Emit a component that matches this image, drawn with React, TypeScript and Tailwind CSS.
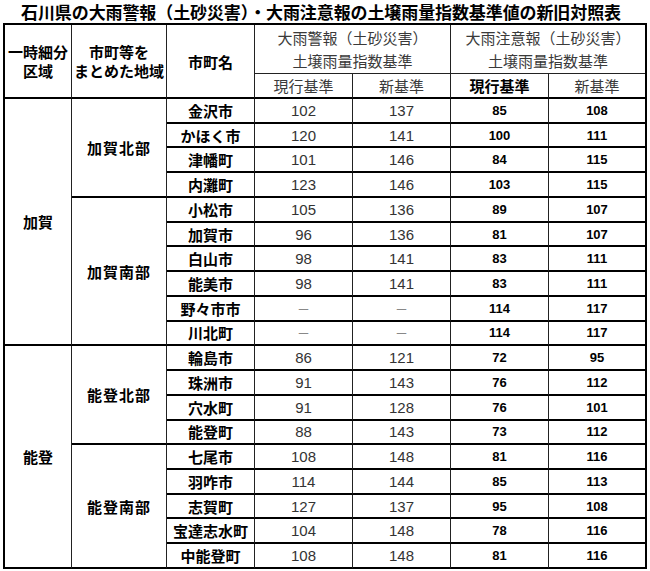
import React from "react";

type Row = [string, string, string, string, string];

const rows: Row[] = [
  ["金沢市", "102", "137", "85", "108"],
  ["かほく市", "120", "141", "100", "111"],
  ["津幡町", "101", "146", "84", "115"],
  ["内灘町", "123", "146", "103", "115"],
  ["小松市", "105", "136", "89", "107"],
  ["加賀市", "96", "136", "81", "107"],
  ["白山市", "98", "141", "83", "111"],
  ["能美市", "98", "141", "83", "111"],
  ["野々市市", "－", "－", "114", "117"],
  ["川北町", "－", "－", "114", "117"],
  ["輪島市", "86", "121", "72", "95"],
  ["珠洲市", "91", "143", "76", "112"],
  ["穴水町", "91", "128", "76", "101"],
  ["能登町", "88", "143", "73", "112"],
  ["七尾市", "108", "148", "81", "116"],
  ["羽咋市", "114", "144", "85", "113"],
  ["志賀町", "127", "137", "95", "108"],
  ["宝達志水町", "104", "148", "78", "116"],
  ["中能登町", "108", "148", "81", "116"],
];

const cell =
  "flex items-center justify-center border-b-2 border-r border-b-black border-r-[#222]";
const lastCell = "flex items-center justify-center border-b-2 border-b-black";

function Num({ v, bold, last }: { v: string; bold?: boolean; last?: boolean }) {
  const base = last ? lastCell : cell;
  if (v === "－") {
    return (
      <div className={`${base} leading-none`}>
        <span className="font-['Noto_Sans_CJK_JP',sans-serif] text-[13px] text-[#888]">－</span>
      </div>
    );
  }
  return (
    <div
      className={`${base} leading-none font-['Liberation_Sans',sans-serif] ${
        bold ? "font-bold text-[13px] text-black" : "text-[15px] text-[#333]"
      }`}
    >
      {v}
    </div>
  );
}

function CityRow({ r }: { r: Row }) {
  return (
    <>
      <div className={`${cell} leading-none font-bold text-[15px] text-black`}>{r[0]}</div>
      <Num v={r[1]} />
      <Num v={r[2]} />
      <Num v={r[3]} bold />
      <Num v={r[4]} bold last />
    </>
  );
}

export default function App() {
  return (
    <div className="w-[650px] h-[571px] bg-white font-['Noto_Sans_CJK_JP','Noto_Sans',sans-serif] text-black">
      <div className="h-[23px] flex items-center justify-center pr-[8px] text-[17px] leading-[23px] font-bold tracking-[-0.1px]">
        石川県の大雨警報（土砂災害）・大雨注意報の土壌雨量指数基準値の新旧対照表
      </div>
      <div className="ml-[3px] w-[644px] border-l-2 border-t-2 border-r-2 border-black grid grid-cols-[67px_95px_88px_98px_98px_98px_96px] grid-rows-[49px_25px_repeat(19,24.74px)]">
        {/* header */}
        <div className={`${cell} row-span-2 flex-col font-bold text-[15px] leading-[19px]`}>
          <span>一時細分</span>
          <span>区域</span>
        </div>
        <div className={`${cell} row-span-2 flex-col font-bold text-[15px] leading-[19px]`}>
          <span>市町等を</span>
          <span>まとめた地域</span>
        </div>
        <div className={`${cell} row-span-2 leading-none font-bold text-[15px]`}>市町名</div>
        <div className="col-span-2 flex flex-col items-center justify-center border-b border-r border-b-[#222] border-r-[#222] text-[15px] leading-[23px] text-[#3a3a3a]">
          <span>大雨警報（土砂災害）</span>
          <span>土壌雨量指数基準</span>
        </div>
        <div className="col-span-2 flex flex-col items-center justify-center border-b border-b-[#222] text-[15px] leading-[23px] text-[#3a3a3a]">
          <span>大雨注意報（土砂災害）</span>
          <span>土壌雨量指数基準</span>
        </div>
        <div className={`${cell} leading-none text-[15px] text-[#3a3a3a]`}>現行基準</div>
        <div className={`${cell} leading-none text-[15px] text-[#3a3a3a]`}>新基準</div>
        <div className={`${cell} leading-none text-[15px] font-bold text-black`}>現行基準</div>
        <div className={`${lastCell} leading-none text-[15px] text-[#3a3a3a]`}>新基準</div>

        {/* 加賀 */}
        <div className={`${cell} row-span-10 leading-none font-bold text-[15px]`}>加賀</div>
        <div className={`${cell} row-span-4 leading-none font-bold text-[15px] tracking-[1px]`}>加賀北部</div>
        <CityRow r={rows[0]} />
        <CityRow r={rows[1]} />
        <CityRow r={rows[2]} />
        <CityRow r={rows[3]} />
        <div className={`${cell} row-span-6 leading-none font-bold text-[15px] tracking-[1px]`}>加賀南部</div>
        <CityRow r={rows[4]} />
        <CityRow r={rows[5]} />
        <CityRow r={rows[6]} />
        <CityRow r={rows[7]} />
        <CityRow r={rows[8]} />
        <CityRow r={rows[9]} />

        {/* 能登 */}
        <div className={`${cell} row-span-9 leading-none font-bold text-[15px]`}>能登</div>
        <div className={`${cell} row-span-4 leading-none font-bold text-[15px] tracking-[1px]`}>能登北部</div>
        <CityRow r={rows[10]} />
        <CityRow r={rows[11]} />
        <CityRow r={rows[12]} />
        <CityRow r={rows[13]} />
        <div className={`${cell} row-span-5 leading-none font-bold text-[15px] tracking-[1px]`}>能登南部</div>
        <CityRow r={rows[14]} />
        <CityRow r={rows[15]} />
        <CityRow r={rows[16]} />
        <CityRow r={rows[17]} />
        <CityRow r={rows[18]} />
      </div>
    </div>
  );
}
